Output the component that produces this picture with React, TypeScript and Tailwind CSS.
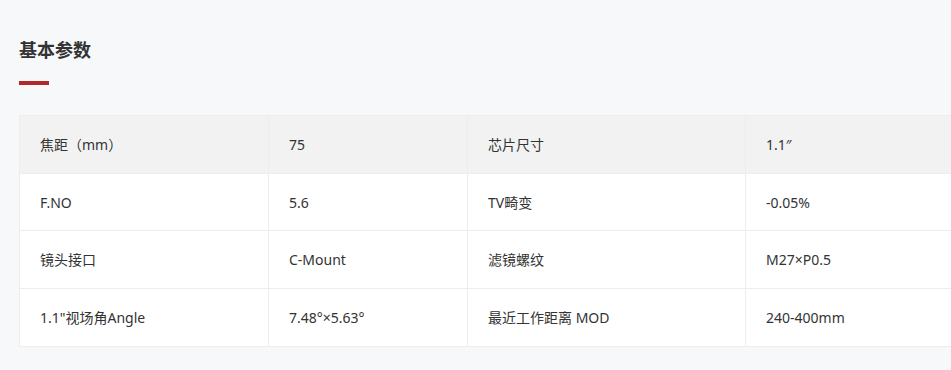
const rows: [string, string, string, string][] = [
  ['焦距（mm）', '75', '芯片尺寸', '1.1″'],
  ['F.NO', '5.6', 'TV畸变', '-0.05%'],
  ['镜头接口', 'C-Mount', '滤镜螺纹', 'M27×P0.5'],
  ['1.1"视场角Angle', '7.48°×5.63°', '最近工作距离 MOD', '240-400mm'],
]

export default function App() {
  return (
    <div
      className="min-h-[370px] w-full overflow-hidden bg-[#f7f8fa] pl-[19px] pt-[38px] text-[#333]"
      style={{ fontFamily: '"Noto Sans", "Noto Sans CJK SC", sans-serif' }}
    >
      <h2 className="text-[18px] font-bold leading-[24px] text-[#333]">基本参数</h2>
      <div className="mt-[19px] h-[4px] w-[30px] bg-[#b3272a]" />
      <table className="mt-[30px] w-[1160px] table-fixed border-collapse bg-white text-[14px]">
        <colgroup>
          <col className="w-[249px]" />
          <col className="w-[199px]" />
          <col className="w-[278px]" />
          <col className="w-[434px]" />
        </colgroup>
        <tbody>
          {rows.map((r, i) => (
            <tr key={i} className={i === 0 ? 'bg-[#f2f2f2]' : 'bg-white'}>
              {r.map((c, j) => (
                <td key={j} className="h-[57.7px] border border-[#ededed] px-[20px] align-middle">
                  {c}
                </td>
              ))}
            </tr>
          ))}
        </tbody>
      </table>
    </div>
  )
}
